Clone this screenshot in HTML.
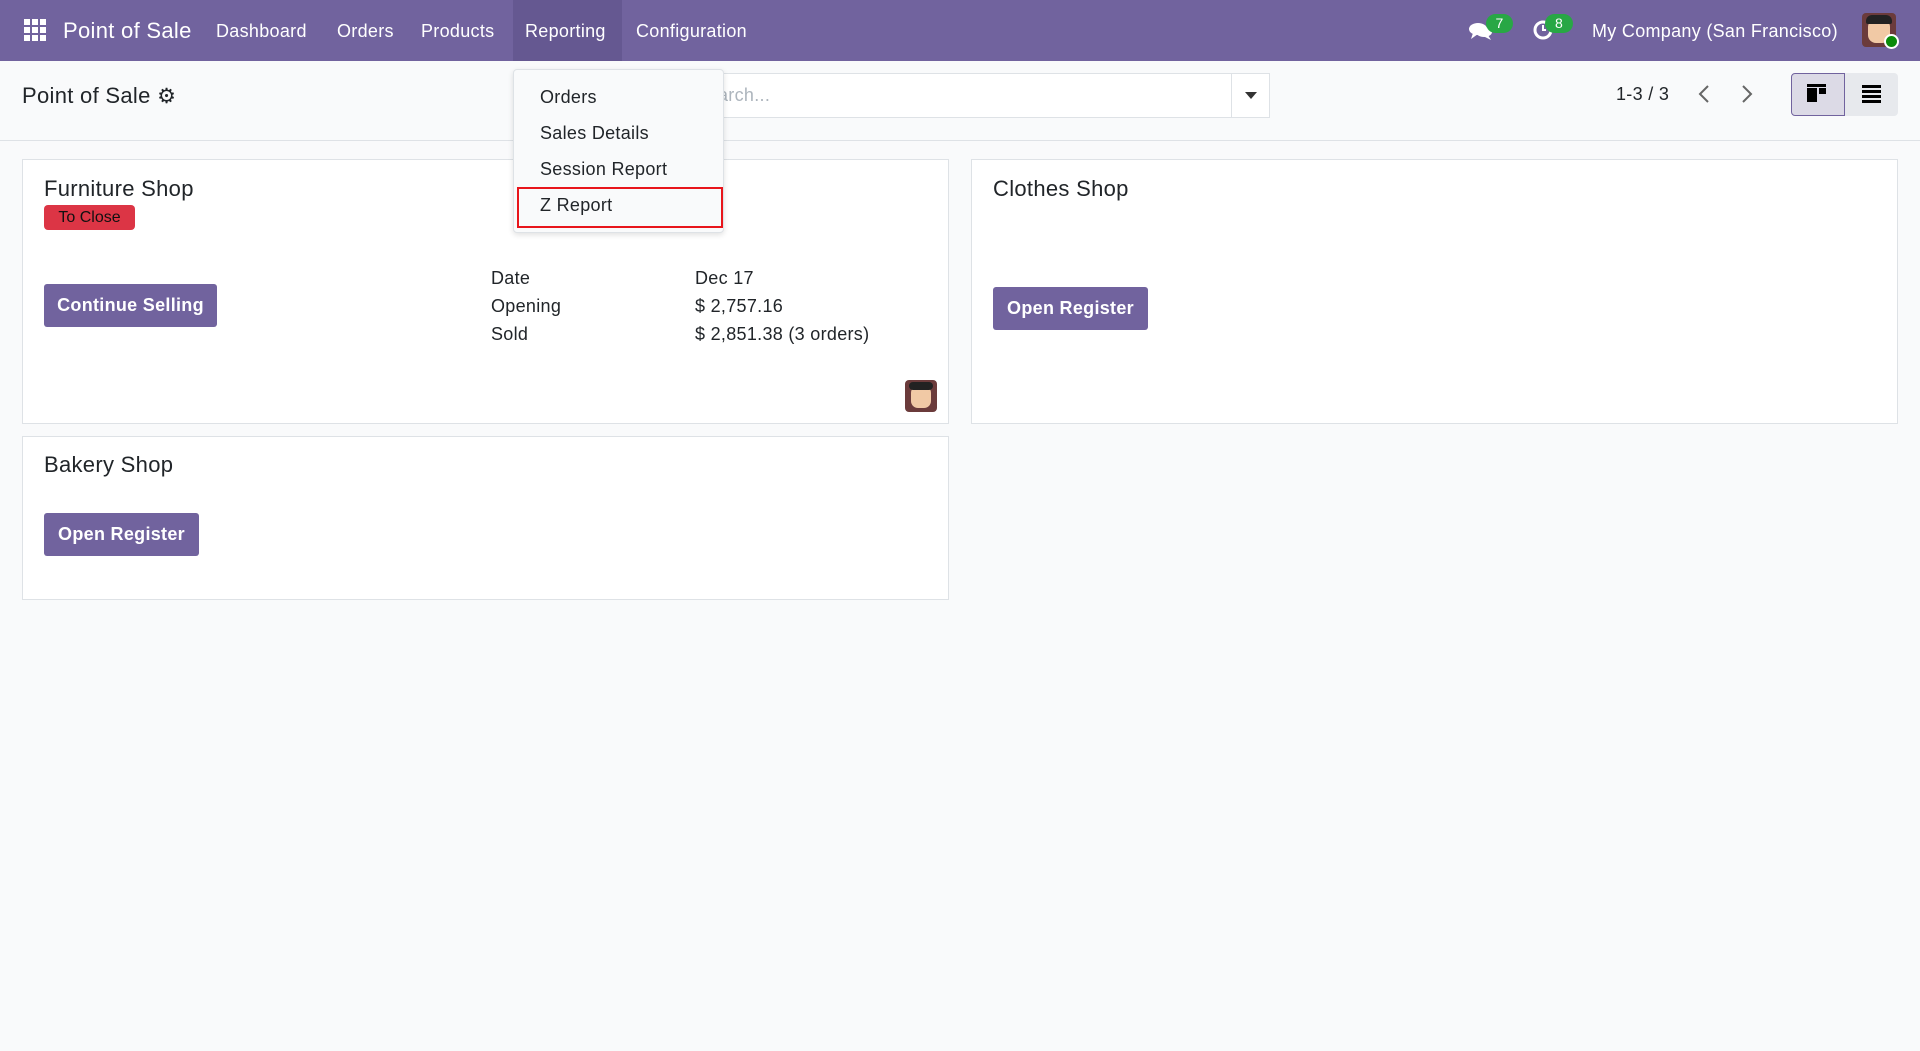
<!DOCTYPE html>
<html><head><meta charset="utf-8"><style>
*{box-sizing:border-box;margin:0;padding:0}
body{width:1920px;height:1051px;background:#f9fafb;font-family:"Liberation Sans",sans-serif;color:#212529;position:relative;overflow:hidden;letter-spacing:0.3px}
.a{position:absolute}
.nav{left:0;top:0;width:1920px;height:61px;background:#71639e;color:#fff}
.nav .t{position:absolute;top:21px;font-size:18px;color:#fff}
.btn{position:absolute;background:#71639e;color:#fff;font-size:18px;font-weight:bold;border-radius:3px;display:flex;align-items:center;justify-content:center}
.card{position:absolute;background:#fff;border:1px solid #dee2e6}
.lbl{position:absolute;font-size:18px}
</style></head><body>
<div class="a nav">
 <svg class="a" style="left:24px;top:19px" width="22" height="22" viewBox="0 0 22 22" fill="#fff">
  <rect x="0" y="0" width="6" height="6"/><rect x="8" y="0" width="6" height="6"/><rect x="16" y="0" width="6" height="6"/>
  <rect x="0" y="8" width="6" height="6"/><rect x="8" y="8" width="6" height="6"/><rect x="16" y="8" width="6" height="6"/>
  <rect x="0" y="16" width="6" height="6"/><rect x="8" y="16" width="6" height="6"/><rect x="16" y="16" width="6" height="6"/></svg>
 <div class="t" style="left:63px;top:18px;font-size:22px">Point of Sale</div>
 <div class="t" style="left:216px">Dashboard</div>
 <div class="t" style="left:337px">Orders</div>
 <div class="t" style="left:421px">Products</div>
 <div class="a" style="left:513px;top:0;width:109px;height:61px;background:#655891"></div>
 <div class="t" style="left:525px">Reporting</div>
 <div class="t" style="left:636px">Configuration</div>
 <svg class="a" style="left:1468px;top:20px" width="26" height="22" viewBox="0 0 26 22" fill="#fff"><ellipse cx="10" cy="9" rx="9" ry="6"/><path d="M5 13 L3 19 L10 14Z"/><ellipse cx="16" cy="12" rx="8" ry="5"/><path d="M20 15 L23 20 L15 16Z"/></svg>
 <div class="a" style="left:1486px;top:14px;width:27px;height:19px;background:#28a745;border-radius:10px;font-size:14px;text-align:center;line-height:19px">7</div>
 <svg class="a" style="left:1532px;top:19px" width="22" height="22" viewBox="0 0 22 22"><circle cx="11" cy="11" r="8" fill="none" stroke="#fff" stroke-width="3"/><path d="M11 6V11H14" stroke="#fff" stroke-width="2" fill="none"/></svg>
 <div class="a" style="left:1545px;top:14px;width:28px;height:19px;background:#28a745;border-radius:10px;font-size:14px;text-align:center;line-height:19px">8</div>
 <div class="t" style="left:1592px">My Company (San Francisco)</div>
 <div class="a" style="left:1862px;top:13px;width:34px;height:34px;background:#6b3b3b;border-radius:4px"><div style="position:absolute;left:6px;top:6px;width:22px;height:24px;background:#f1c9a5;border-radius:8px"></div><div style="position:absolute;left:4px;top:2px;width:26px;height:9px;background:#222;border-radius:6px 6px 2px 2px"></div></div>
 <div class="a" style="left:1884px;top:34px;width:15px;height:15px;background:#0a8a0a;border:2px solid #fff;border-radius:50%"></div>
</div>

<div class="a" style="left:22px;top:83px;font-size:22px">Point of Sale <span style="font-size:21px">⚙</span></div>
<div class="a" style="left:690px;top:73px;width:580px;height:45px;border:1px solid #dee2e6;background:#fff"></div>
<div class="a" style="left:718px;top:85px;font-size:18px;color:#adb5bd">arch...</div>
<div class="a" style="left:1231px;top:73px;width:39px;height:45px;border-left:1px solid #dee2e6"></div>
<div class="a" style="left:1245px;top:92px;width:0;height:0;border-left:6px solid transparent;border-right:6px solid transparent;border-top:7px solid #333"></div>
<div class="a" style="left:1616px;top:84px;font-size:18px">1-3 / 3</div>
<svg class="a" style="left:1697px;top:84px" width="14" height="20"><path d="M11 2 L3 10 L11 18" stroke="#666" stroke-width="2" fill="none"/></svg>
<svg class="a" style="left:1740px;top:84px" width="14" height="20"><path d="M3 2 L11 10 L3 18" stroke="#666" stroke-width="2" fill="none"/></svg>
<div class="a" style="left:1791px;top:73px;width:54px;height:43px;background:#dcdae6;border:1px solid #71639e;border-radius:4px 0 0 4px"></div>
<div class="a" style="left:1845px;top:73px;width:53px;height:43px;background:#e7e9ed;border-radius:0 4px 4px 0"></div>
<svg class="a" style="left:1807px;top:84px" width="20" height="20"><rect x="0" y="0" width="19" height="3"/><rect x="0" y="4" width="10" height="14"/><rect x="12" y="4" width="7" height="6"/></svg>
<svg class="a" style="left:1862px;top:85px" width="20" height="18"><rect y="0" width="19" height="3"/><rect y="5" width="19" height="3"/><rect y="10" width="19" height="3"/><rect y="15" width="19" height="3"/></svg>
<div class="a" style="left:0;top:140px;width:1920px;height:1px;background:#dee2e6"></div>

<div class="card" style="left:22px;top:159px;width:927px;height:265px">
 <div class="lbl" style="left:21px;top:16px;font-size:22px">Furniture Shop</div>
 <div class="a" style="left:21px;top:45px;width:91px;height:25px;background:#dc3545;border-radius:4px;color:#111;font-size:16px;text-align:center;line-height:25px;letter-spacing:0">To Close</div>
 <div class="btn" style="left:21px;top:124px;width:173px;height:43px">Continue Selling</div>
 <div class="lbl" style="left:468px;top:108px">Date</div><div class="lbl" style="left:672px;top:108px">Dec 17</div>
 <div class="lbl" style="left:468px;top:136px">Opening</div><div class="lbl" style="left:672px;top:136px">$ 2,757.16</div>
 <div class="lbl" style="left:468px;top:164px">Sold</div><div class="lbl" style="left:672px;top:164px">$ 2,851.38 (3 orders)</div>
 <div class="a" style="left:882px;top:220px;width:32px;height:32px;background:#6b3b3b;border-radius:4px"><div style="position:absolute;left:6px;top:6px;width:20px;height:22px;background:#f1c9a5;border-radius:7px"></div><div style="position:absolute;left:4px;top:2px;width:24px;height:8px;background:#222;border-radius:5px"></div></div>
</div>
<div class="card" style="left:971px;top:159px;width:927px;height:265px">
 <div class="lbl" style="left:21px;top:16px;font-size:22px">Clothes Shop</div>
 <div class="btn" style="left:21px;top:127px;width:155px;height:43px">Open Register</div>
</div>
<div class="card" style="left:22px;top:436px;width:927px;height:164px">
 <div class="lbl" style="left:21px;top:15px;font-size:22px">Bakery Shop</div>
 <div class="btn" style="left:21px;top:76px;width:155px;height:43px">Open Register</div>
</div>

<div class="a" style="left:513px;top:69px;width:211px;height:164px;background:#f9fafb;border:1px solid #dee2e6;border-radius:4px;box-shadow:0 2px 6px rgba(0,0,0,.12)">
 <div class="lbl" style="left:26px;top:17px">Orders</div>
 <div class="lbl" style="left:26px;top:53px">Sales Details</div>
 <div class="lbl" style="left:26px;top:89px">Session Report</div>
 <div class="a" style="left:3px;top:117px;width:206px;height:41px;border:2px solid #e8151b"></div>
 <div class="lbl" style="left:26px;top:125px">Z Report</div>
</div>
</body></html>
